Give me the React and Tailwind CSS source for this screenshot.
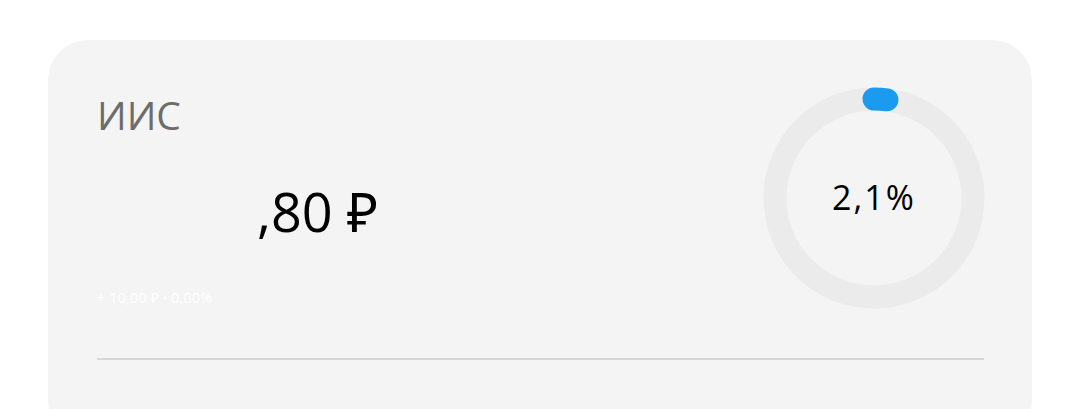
export default function App() {
  const pct = 2.1;
  const r = 99;
  const c = 2 * Math.PI * r;
  const arc = (c * pct) / 100;

  return (
    <div className="min-h-[409px] bg-white pt-[40px] pl-[48px] pr-[48px] overflow-hidden" style={{ fontFamily: '"Open Sans", "Noto Sans", sans-serif' }}>
      <div className="h-[400px] w-[984px] rounded-[40px] bg-[#f4f4f4] pl-[49px] pr-[48px] pt-[47px]">
        <div className="flex justify-between">
          <div className="flex flex-col">
            <p className="mt-[4px] text-[39px] leading-[48px] text-[#6c6c6c]">ИИС</p>
            <p className="mt-[42px] ml-[160px] text-[54px] leading-[60px] text-black">
              ,80 ₽
            </p>
            <p className="mt-[49px] text-[14px] leading-[16px] tracking-wide text-white">+ 10,00 ₽ · 0,00%</p>
          </div>
          <div className="relative -mr-[1px] h-[222px] w-[222px]">
            <svg width="222" height="222" viewBox="0 0 222 222" className="-rotate-90">
              <circle cx="111" cy="111" r={r} fill="none" stroke="#ebebeb" strokeWidth="23" />
              <circle
                cx="111"
                cy="111"
                r={r}
                fill="none"
                stroke="#1a9bf0"
                strokeWidth="23"
                strokeLinecap="round"
                strokeDasharray={`${arc} ${c}`}
              />
            </svg>
            <div className="absolute inset-0 flex items-center justify-center">
              <span className="-mt-[2px] text-[34px] tracking-[2px] text-black">2,1%</span>
            </div>
          </div>
        </div>
        <div className="mt-[49px] h-[2px] bg-[#d7d7d7]" />
      </div>
    </div>
  );
}
